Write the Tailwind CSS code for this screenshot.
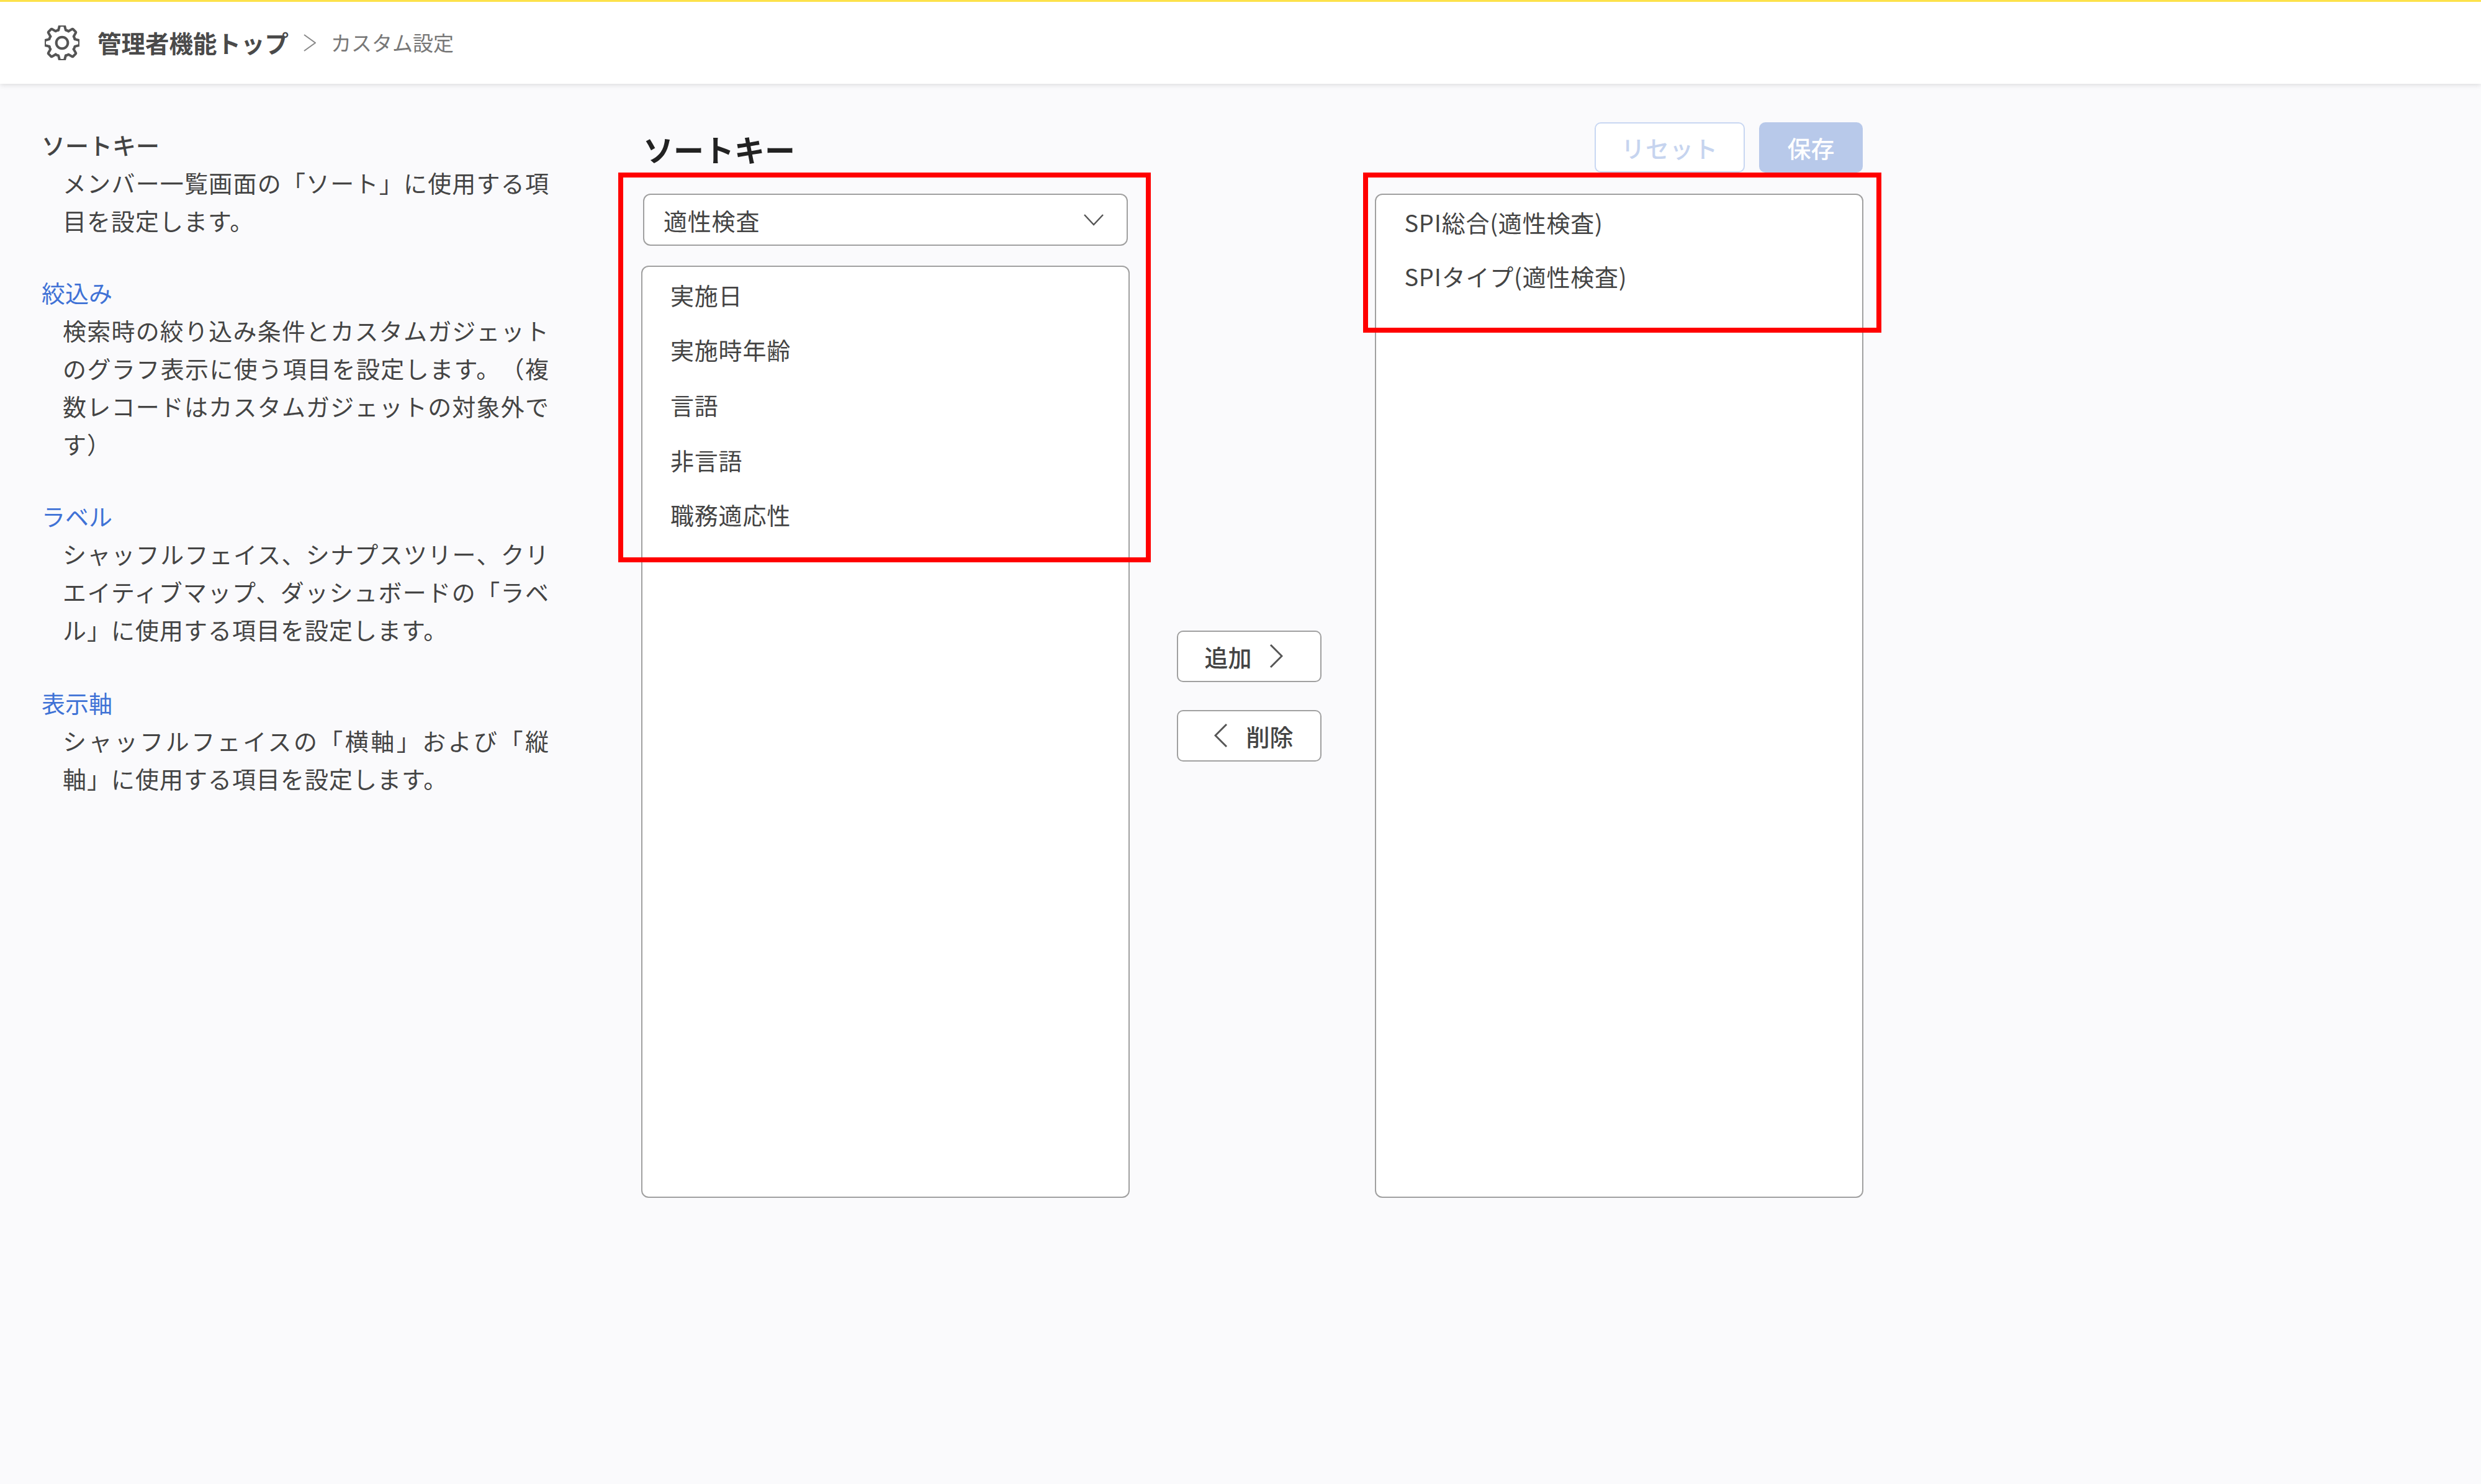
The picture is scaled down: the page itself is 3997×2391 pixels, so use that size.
<!DOCTYPE html>
<html lang="ja">
<head>
    <meta charset="UTF-8">
    <title>カスタム設定</title>
    <script src="https://cdn.jsdelivr.net/npm/@tailwindcss/browser@4"></script>
</head>
<body class="relative h-[2391px] w-[3997px] overflow-hidden bg-[#fafafc] font-['Noto_Sans_CJK_JP','Noto_Sans',sans-serif] text-[38px] text-[#444]">
    <header class="flex h-[135px] items-center border-t-[3px] border-[#fde24a] bg-white pl-[72px] shadow-[0_2px_8px_rgba(0,0,0,0.12)]">
        <svg class="h-[56px] w-[56px] text-[#555]" viewBox="3 3 18 18" fill="none" stroke="currentColor" stroke-width="1.3" stroke-linecap="round" stroke-linejoin="round">
            <path id="tooth" d="M10.1 5.4L10.7 3.2Q10.8 3 11 3H13Q13.2 3 13.3 3.2L13.9 5.4Q14.7 5.6 15.32 5.99"/>
            <use href="#tooth" transform="rotate(45 12 12)"/>
            <use href="#tooth" transform="rotate(90 12 12)"/>
            <use href="#tooth" transform="rotate(135 12 12)"/>
            <use href="#tooth" transform="rotate(180 12 12)"/>
            <use href="#tooth" transform="rotate(225 12 12)"/>
            <use href="#tooth" transform="rotate(270 12 12)"/>
            <use href="#tooth" transform="rotate(315 12 12)"/>
            <circle cx="12" cy="12" r="3"/>
        </svg>
        <span class="ml-[29px] text-[38.5px] font-bold text-[#4a4a4a]">管理者機能トップ</span>
        <svg class="ml-[24px] h-[28px] w-[20px] text-[#888]" viewBox="0 0 20 28" fill="none" stroke="currentColor" stroke-width="2"><path d="M1 1l18 13L1 27"/></svg>
        <span class="ml-[24px] text-[33px] text-[#777]">カスタム設定</span>
    </header>

    <main class="flex">
        <aside class="w-[1033px] shrink-0 pl-[67px] pt-[67px] leading-[61px] [text-spacing-trim:space-all]">
            <h2 class="font-medium">ソートキー</h2>
            <p class="w-[818px] pl-[34px] text-justify tracking-[1px]">メンバー一覧画面の「ソート」に使用する項目を設定します。</p>
            <h2 class="mt-[55px] text-[#3f72d6]">絞込み</h2>
            <p class="w-[818px] pl-[34px] text-justify tracking-[1px]">検索時の絞り込み条件とカスタムガジェットのグラフ表示に使う項目を設定します。（複数レコードはカスタムガジェットの対象外です）</p>
            <h2 class="mt-[55px] text-[#3f72d6]">ラベル</h2>
            <p class="w-[818px] pl-[34px] text-justify tracking-[1px]">シャッフルフェイス、シナプスツリー、クリエイティブマップ、ダッシュボードの「ラベル」に使用する項目を設定します。</p>
            <h2 class="mt-[57px] text-[#3f72d6]">表示軸</h2>
            <p class="w-[818px] pl-[34px] text-justify tracking-[1px]">シャッフルフェイスの「横軸」および「縦軸」に使用する項目を設定します。</p>
        </aside>

        <section class="w-[1969px] pt-[62px]">
            <div class="flex h-[81px] items-center justify-between">
                <h1 class="pl-[3px] pt-[5px] text-[49px] font-bold text-[#222]">ソートキー</h1>
                <div class="flex h-full gap-[23px] pr-[1px]">
                    <button class="w-[242px] rounded-[10px] border-2 border-[#c8d7f2] bg-white font-medium tracking-[1px] text-[#c6d4ef]">リセット</button>
                    <button class="w-[167px] rounded-[10px] bg-[#b8c9ea] font-medium text-white">保存</button>
                </div>
            </div>
            <div class="mt-[34px] flex h-[1618px] tracking-[0.8px]">
                <div class="flex w-[787px] flex-col">
                    <div class="mx-[3px] flex h-[84px] items-center justify-between rounded-[12px] border-2 border-[#a0a0a0] bg-white pl-[31px] pr-[36px]">
                        <span>適性検査</span>
                        <svg class="h-[20px] w-[34px] text-[#555]" viewBox="0 0 34 20" fill="none" stroke="currentColor" stroke-width="2.5"><path d="M2 2l15 16L32 2"/></svg>
                    </div>
                    <ul class="mt-[32px] flex-1 rounded-[12px] border-2 border-[#a0a0a0] bg-white pl-[45px]">
                        <li class="flex h-[88.6px] items-center">実施日</li>
                        <li class="flex h-[88.6px] items-center">実施時年齢</li>
                        <li class="flex h-[88.6px] items-center">言語</li>
                        <li class="flex h-[88.6px] items-center">非言語</li>
                        <li class="flex h-[88.6px] items-center">職務適応性</li>
                    </ul>
                </div>
                <div class="flex w-[396px] flex-col items-center justify-center gap-[45px] pr-[10px] tracking-normal">
                    <button class="flex h-[83px] w-[233px] items-center justify-center gap-[29px] rounded-[10px] border-2 border-[#a0a0a0] bg-white pr-[17px] font-medium">追加
                        <svg class="h-[40px] w-[22px] text-[#555]" viewBox="0 0 22 40" fill="none" stroke="currentColor" stroke-width="3"><path d="M2 2l18 18L2 38"/></svg>
                    </button>
                    <button class="flex h-[83px] w-[233px] items-center justify-center gap-[29px] rounded-[10px] border-2 border-[#a0a0a0] bg-white pl-[15px] font-medium">
                        <svg class="h-[40px] w-[22px] text-[#555]" viewBox="0 0 22 40" fill="none" stroke="currentColor" stroke-width="3"><path d="M20 2L2 20l18 18"/></svg>
                        削除
                    </button>
                </div>
                <ul class="w-[787px] rounded-[12px] border-2 border-[#a0a0a0] bg-white pl-[45px]">
                    <li class="flex h-[86px] items-center">SPI総合(適性検査)</li>
                    <li class="flex h-[89px] items-center">SPIタイプ(適性検査)</li>
                </ul>
            </div>
        </section>
    </main>

    <div class="absolute left-[996px] top-[278px] h-[628px] w-[858px] border-[8px] border-[#ff0000]"></div>
    <div class="absolute left-[2196px] top-[278px] h-[258px] w-[835px] border-[8px] border-[#ff0000]"></div>
</body>
</html>
